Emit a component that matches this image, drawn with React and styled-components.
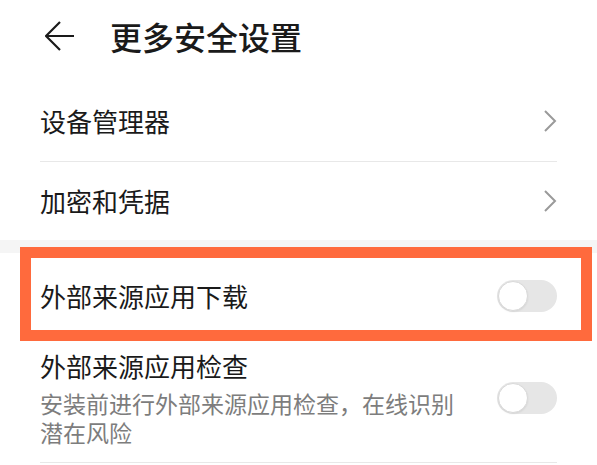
import styled, { createGlobalStyle } from "styled-components";

const GlobalStyle = createGlobalStyle`
  html, body {
    margin: 0;
    padding: 0;
    background: #ffffff;
  }
  body {
    font-family: "Noto Sans CJK SC", "Noto Sans", sans-serif;
    color: #1a1a1a;
  }
`;

const Page = styled.div`
  width: 597px;
  background: #ffffff;
  overflow: hidden;
`;

const Header = styled.div`
  display: flex;
  align-items: center;
  height: 72px;
  padding: 0 0 8px 45px;
`;

const BackButton = styled.div`
  display: flex;
  width: 30px;
  height: 30px;
  margin-right: 35px;
  cursor: pointer;
`;

const Title = styled.h1`
  margin: 0;
  font-size: 32px;
  font-weight: 500;
  line-height: 44px;
  color: #1a1a1a;
`;

const Group = styled.div`
  display: flex;
  flex-direction: column;
`;

const GroupGap = styled.div`
  height: 13px;
  background: #f5f5f5;
`;

const Row = styled.div`
  display: flex;
  align-items: center;
  justify-content: space-between;
  margin: 0 40px;
  height: ${(p) => (p.$height ? `${p.$height}px` : "auto")};
  padding: ${(p) => p.$padding || "0"};
  border-bottom: ${(p) => (p.$divider ? "1px solid #e8e8e8" : "none")};
  box-sizing: border-box;
`;

const Label = styled.span`
  font-size: 26px;
  line-height: 34px;
  color: #1a1a1a;
`;

const TextBlock = styled.div`
  display: flex;
  flex-direction: column;
  width: 425px;
`;

const Sub = styled.span`
  margin-top: 6px;
  font-size: 23px;
  line-height: 29px;
  color: #7d7d7d;
`;

const Highlight = styled.div`
  position: relative;
  &::after {
    content: "";
    position: absolute;
    top: -6px;
    bottom: -3px;
    left: 20px;
    right: 5px;
    border: 11px solid #ff6a3d;
    pointer-events: none;
  }
`;

const Track = styled.div`
  position: relative;
  flex-shrink: 0;
  width: 60px;
  height: 32px;
  border-radius: 16px;
  background: #e6e6e6;
`;

const Knob = styled.div`
  position: absolute;
  top: 1px;
  left: 1px;
  width: 28px;
  height: 28px;
  border-radius: 50%;
  background: #ffffff;
  border: 1px solid #d9d9d9;
  box-shadow: 0 1px 2px rgba(0, 0, 0, 0.08);
`;

function Toggle() {
  return (
    <Track>
      <Knob />
    </Track>
  );
}

function Chevron() {
  return (
    <svg width="14" height="22" viewBox="0 0 14 22">
      <path d="M2 1 L12 11 L2 21" fill="none" stroke="#9a9a9a" strokeWidth="2" />
    </svg>
  );
}

export default function App() {
  return (
    <Page>
      <GlobalStyle />
      <Header>
        <BackButton>
          <svg width="30" height="30" viewBox="0 0 30 30">
            <path
              d="M29 15 H2 M15 1 L1 15 L15 29"
              fill="none"
              stroke="#1a1a1a"
              strokeWidth="2.2"
            />
          </svg>
        </BackButton>
        <Title>更多安全设置</Title>
      </Header>
      <Group>
        <Row $height={82} $divider>
          <Label>设备管理器</Label>
          <Chevron />
        </Row>
        <Row $height={78}>
          <Label>加密和凭据</Label>
          <Chevron />
        </Row>
      </Group>
      <GroupGap />
      <Group>
        <Highlight>
          <Row $height={85}>
            <Label>外部来源应用下载</Label>
            <Toggle />
          </Row>
        </Highlight>
        <Row $padding="11px 0 15px" $divider>
          <TextBlock>
            <Label>外部来源应用检查</Label>
            <Sub>安装前进行外部来源应用检查，在线识别潜在风险</Sub>
          </TextBlock>
          <Toggle />
        </Row>
      </Group>
    </Page>
  );
}
